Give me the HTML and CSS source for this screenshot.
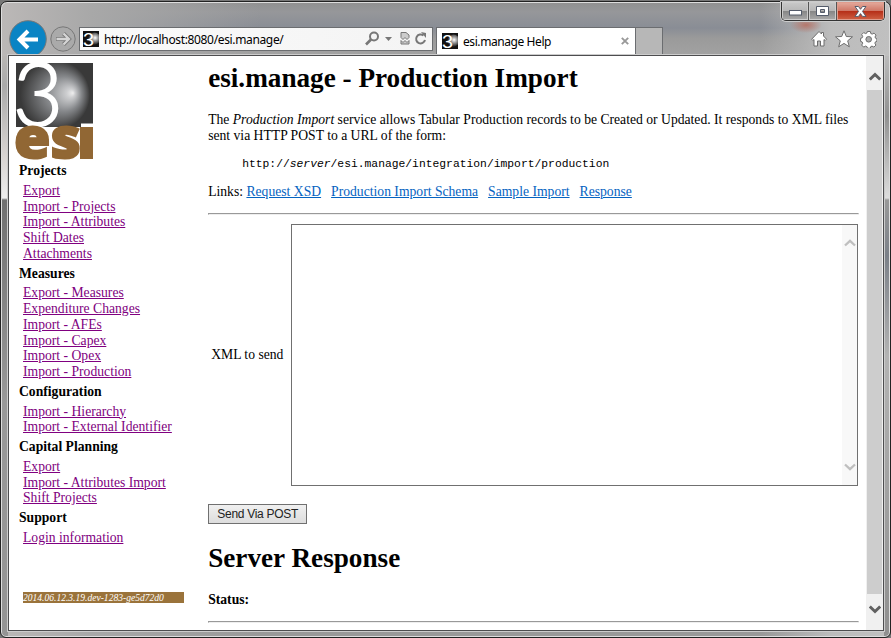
FILE: index.html
```
<!DOCTYPE html>
<html lang="en">
<head>
<meta charset="utf-8">
<title>esi.manage Help</title>
<link rel="stylesheet" href="styles.css">
</head>
<body>
<svg class="defs" width="0" height="0">
  <defs>
    <radialGradient id="globe" gradientUnits="userSpaceOnUse" cx="40" cy="32" r="35" fx="58" fy="30">
      <stop offset="0" stop-color="#eee"/><stop offset=".12" stop-color="#cdced0"/><stop offset=".5" stop-color="#85878a"/><stop offset="1" stop-color="#383838"/>
    </radialGradient>
    <symbol id="favicon" viewBox="0 0 16 16">
      <rect width="16" height="16" fill="#111"/><circle cx="11.500" cy="7.500" r="6" fill="url(#fav)"/>
      <text x="0" y="14.500" font-family="Liberation Sans" font-size="18" textLength="11" lengthAdjust="spacingAndGlyphs" fill="#fff">3</text>
    </symbol>
    <radialGradient id="fav" cx=".55" cy=".45"><stop offset="0" stop-color="#fff"/><stop offset="1" stop-color="#333"/></radialGradient>
  </defs>
</svg>
<div class="window">
  <header class="chrome">
    <svg class="back" width="38" height="34" viewBox="0 0 38 34"><circle cx="19" cy="19" r="18.300" fill="#0a84c4" stroke="#777" stroke-width="1"/><path d="M29 19.500H11M19 11l-8.500 8.500L19 28" fill="none" stroke="#fff" stroke-width="4"/></svg>
    <svg class="forward" width="26" height="26" viewBox="0 0 26 26"><circle cx="13" cy="13" r="12.200" fill="#aaa" stroke="#777"/><path d="M6 13h13M13.500 7.500l5.500 5.500-5.500 5.500" fill="none" stroke="#777" stroke-width="4"/><path d="M6.500 13h12.500M13.500 7.500l5.500 5.500-5.500 5.500" fill="none" stroke="#d5d5d5" stroke-width="2.300"/></svg>
    <div class="address">
      <svg width="16" height="16"><use href="#favicon"/></svg>
      <span class="url">http://localhost:8080/esi.manage/</span>
      <svg class="tools" width="62" height="16" viewBox="0 0 62 16" fill="none" stroke="#777">
        <circle cx="9" cy="5.500" r="4" stroke-width="2"/><path d="M6 8.500L1 13.500" stroke-width="2.600"/>
        <path d="M20 6h7l-3.500 4z" fill="#777" stroke="none"/>
        <path d="M36 6.500v-5h5l3 2.500v2.500l-2 2-2-2-2 2zM36 9.500l2 2 2-2 2 2 2-2v3.500h-8z" fill="#ccc"/>
        <path d="M58.500 4.500A4.500 4.500 0 1 0 60 9" stroke-width="2"/><path d="M56 1l5 1v5z" fill="#777" stroke="none"/>
      </svg>
    </div>
    <div class="tab">
      <svg width="16" height="16"><use href="#favicon"/></svg>
      <span class="tab-title">esi.manage Help</span>
      <svg class="tab-close" width="8" height="8"><path d="M.8.8l6.400 6.400M7.200.8L.8 7.200" stroke="#999" stroke-width="1.900"/></svg>
    </div>
    <div class="new-tab"></div>
    <div class="commands">
      <svg width="66" height="18" viewBox="0 0 66 18" fill="#fff" stroke="#6d6d6d">
        <path d="M.7 9.200L8 1.500l2.500 2.500V2.500h2V6l3 3.200-1.300 1.300-1.200-1V16h-3.500v-5h-3v5H3V9.500l-1.200 1z"/>
        <path d="M33 .8l2.300 5.700 6.200.3-4.800 4 1.600 6-5.300-3.400-5.300 3.400 1.600-6-4.800-4 6.200-.3z"/>
        <g><path d="M56.300 1.500h3l.5 2 1.400.6 1.800-1 2 2-1 1.900.6 1.300 1.300.5v2.500l-1.500.6-.5 1.300 1 1.900-2 2-1.900-1-1.300.6-.5 1.600h-2.700l-.6-1.700-1.300-.5-1.900 1-2-2 1-1.900-.6-1.300-1.500-.5V8.300l1.600-.5.5-1.400-1-1.800 2-2 1.900 1 1.300-.6z"/><circle cx="57.700" cy="9.300" r="2.800" fill="#aaa"/></g>
      </svg>
    </div>
    <div class="captions">
      <span class="cap"><svg width="13" height="6"><rect x=".5" y=".5" width="12" height="4.500" fill="#fff" stroke="#555c6b"/></svg></span>
      <span class="cap"><svg width="13" height="10"><path d="M.5.5h12v9H.5zM4.500 3.500v3h4v-3z" fill="#fff" fill-rule="evenodd" stroke="#555c6b"/></svg></span>
      <span class="cap cap-close"><svg width="13" height="11"><path d="M1 .5h3.500l2 2.800 2-2.800H12L8.500 5.400l3.500 5H8.500l-2-2.800-2 2.800H1l3.500-5z" fill="#fff" stroke="#555c6b"/></svg></span>
    </div>
  </header>
  <div class="viewport">
    <nav class="sidebar">
      <svg class="logo" width="78" height="96" viewBox="0 0 78 96">
        <path d="M1 0h77v64H1z" fill="#393939"/><circle cx="40" cy="32" r="35" fill="url(#globe)" clip-path="inset(3px 0)"/>
        <text x="-2" y="63" class="logo-three" textLength="50" lengthAdjust="spacingAndGlyphs">3</text>
        <text x="-1" y="95" class="logo-esi" textLength="67" lengthAdjust="spacingAndGlyphs">es</text>
        <path d="M66 60.500h12V64H66z" fill="#fff"/><path d="M65 64h13v32H65z" fill="#916734"/>
      </svg>
      <h4>Projects</h4>
      <ul><li><a>Export</a></li><li><a>Import - Projects</a></li><li><a>Import - Attributes</a></li><li><a>Shift Dates</a></li><li><a>Attachments</a></li></ul>
      <h4>Measures</h4>
      <ul><li><a>Export - Measures</a></li><li><a>Expenditure Changes</a></li><li><a>Import - AFEs</a></li><li><a>Import - Capex</a></li><li><a>Import - Opex</a></li><li><a>Import - Production</a></li></ul>
      <h4>Configuration</h4>
      <ul><li><a>Import - Hierarchy</a></li><li><a>Import - External Identifier</a></li></ul>
      <h4>Capital Planning</h4>
      <ul><li><a>Export</a></li><li><a>Import - Attributes Import</a></li><li><a>Shift Projects</a></li></ul>
      <h4>Support</h4>
      <ul><li><a>Login information</a></li></ul>
      <div class="version">2014.06.12.3.19.dev-1283-ge5d72d0</div>
    </nav>
    <main class="content">
      <h1>esi.manage - Production Import</h1>
      <p class="intro">The <em>Production Import</em> service allows Tabular Production records to be Created or Updated. It responds to XML files<br>sent via HTTP POST to a URL of the form:</p>
      <pre>http://<em>server</em>/esi.manage/integration/import/production</pre>
      <p class="links"><span>Links: <a>Request XSD</a></span><a>Production Import Schema</a><a>Sample Import</a><a>Response</a></p>
      <hr>
      <div class="field">
        <label>XML to send</label>
        <div class="textarea"><div class="inner-scroll">
          <svg width="12" height="8"><path d="M1 6.500L6 1.800l5 4.700" fill="none" stroke="#bfbfbf" stroke-width="2.300"/></svg>
          <svg width="12" height="8"><path d="M1 1.500L6 6.200l5-4.700" fill="none" stroke="#bfbfbf" stroke-width="2.300"/></svg>
        </div></div>
      </div>
      <button>Send Via POST</button>
      <h1 class="response">Server Response</h1>
      <p class="status">Status:</p>
      <hr>
    </main>
    <div class="scrollbar">
      <svg width="12" height="9"><path d="M.8 7.500L6 2.500l5.200 5" fill="none" stroke="#606060" stroke-width="3"/></svg>
      <div class="thumb"></div>
      <svg width="12" height="9"><path d="M.8 1.500L6 6.500l5.200-5" fill="none" stroke="#606060" stroke-width="3"/></svg>
    </div>
  </div>
</div>
</body>
</html>
```
FILE: styles.css
```
* { box-sizing: border-box; }
body { margin: 0; width: 891px; height: 638px; overflow: hidden; background: #777; font: 13.65px/15.75px "Liberation Serif", serif; color: #000; }
svg { display: block; flex: none; }
.defs { position: absolute; }
.window {
  height: 637px; margin-top: 1px; padding: 0 6px 7px 7px; border: 1px solid #222; border-radius: 7px 7px 6px 6px;
  box-shadow: inset 0 0 0 1px #ddd;
  background:
    linear-gradient(#b9b6b4, #aaa 30px, #d8d4d2 100px, #eee 142px, #707070 144px, #999 346px, #939393) 0 54px / 7px 100% no-repeat,
    linear-gradient(#bbb, #909090 60px, #ddd 142px, #999 144px, #7b8088 200px, #b3b3b3 300px, #888) 100% 54px / 6px 100% no-repeat,
    radial-gradient(ellipse 16px 8px at 805px 23px, #b5776b, transparent),
    linear-gradient(90deg, #bbb8b7, #a8a8a8 90px, transparent 260px, transparent 760px, #bcbcbc 830px, #c0c0c0),
    linear-gradient(#909090, #96979a 10px, #898d95 26px, #9a9a9a 36px, #a3a3a3 55px, #999 100%);
}
.chrome { position: relative; display: flex; height: 53px; padding-left: 1px; }
.back { margin-top: 18px; }
.forward { margin: 24px 0 0 3px; }
.address { display: flex; align-items: center; width: 354px; height: 24px; margin: 25px 0 0 3px; padding: 0 5px 0 3px; border: 1px solid #6b6d70; background: linear-gradient(90deg, #fafafa, #f4f4f4); }
.url, .tab-title { font: 12px/16px "Noto Sans", sans-serif; white-space: nowrap; }
.url { width: 179px; margin: 2px 0 0 5px; letter-spacing: -.35px; }
.tools { margin-left: auto; }
.tab { display: flex; align-items: center; width: 200px; height: 27px; margin: 25px 0 0 3px; padding: 0 6px 0 5px; border: solid #6b6d70; border-width: 1px 1px 0; background: #fff; }
.tab-title { margin: 2px 0 0 5px; letter-spacing: -.42px; }
.tab-close { margin-left: auto; }
.new-tab { width: 27px; height: 27px; margin-top: 25px; border: solid #6b6d70; border-width: 1px 1px 0 0; background: #b7b7b7; }
.commands { margin: 28px 0 0 148px; }
.captions { position: absolute; top: 0; right: -1px; display: flex; width: 104px; height: 19px; border: 1px solid #333; border-top: 0; border-radius: 0 0 5px 5px; overflow: hidden; box-shadow: 0 0 0 1px #ccc; }
.cap { display: flex; align-items: center; justify-content: center; width: 28px; border-right: 1px solid #555; background: linear-gradient(#c9c9c9, #b6b6b6 50%, #858585 50%, #aaa); box-shadow: inset 0 0 0 1px #ccc; }
.cap:first-child svg { margin-top: 4px; }
.cap-close { width: 48px; border: 0; background: linear-gradient(#e5ac9f, #cf7665 50%, #b52d17 50%, #cf6245); box-shadow: inset 0 0 0 1px #df9d8e; }
.viewport { display: flex; height: 576px; border: 1px solid #4d4d4f; background: #fff; overflow: hidden; box-shadow: 0 0 0 1px #ccc; }
.sidebar { width: 200px; padding: 7px 0 0 6px; }
.logo { overflow: visible; }
.logo-three { font: 300 88px Lato, sans-serif; fill: #fff; stroke: #fff; stroke-width: 2px; }
.logo-esi { font: 800 57px "Open Sans", sans-serif; fill: #916734; stroke: #916734; stroke-width: 2px; }
h4 { margin: 0; padding: 4px 0 4px 4px; font: bold 13.65px/15.75px "Liberation Serif", serif; }
ul { list-style: none; margin: 0; padding: 0 0 0 8px; }
.sidebar a { color: #800080; text-decoration: underline; }
.version { width: 161px; height: 11px; margin: 46px 0 0 8px; background: #9a733b; color: #fff; font: italic 9.55px/11px "Liberation Serif", serif; white-space: nowrap; }
.content { width: 651px; margin-left: 1px; flex: none; margin-right: -1px; }
h1 { margin: 6px 0 0; font: bold 27.2px/32px "Liberation Serif", serif; white-space: nowrap; }
p { margin: 0; white-space: nowrap; }
.intro { margin-top: 18px; line-height: 16px; }
pre { margin: 13px 0 0 34px; font: 11.34px/14px "Liberation Mono", monospace; }
.links { display: flex; gap: 10px; margin-top: 13px; line-height: 16px; }
.links a { color: #0563c1; text-decoration: underline; }
hr { height: 2px; margin: 13px 0 0; border: 1px solid #999; border-right-color: #eee; border-bottom-color: #eee; }
.field { display: flex; align-items: center; width: 650px; height: 262px; margin-top: 9px; padding-left: 3px; }
.field label { width: 80px; }
.textarea { display: flex; justify-content: flex-end; flex: 1; height: 262px; border: 1px solid #707070; }
.inner-scroll { display: flex; flex-direction: column; justify-content: space-between; width: 15px; padding: 14px 0 14px 2px; background: #f8f8f8; }
button { display: block; width: 99px; height: 20px; margin: 18px 0 0; padding: 0; border: 1px solid #707070; border-radius: 0; background: linear-gradient(#f0f0f0, #ddd); color: #222; font: 12px/16px "Liberation Sans", sans-serif; letter-spacing: -.3px; white-space: nowrap; }
.response { margin-top: 18px; }
.status { margin-top: 18px; font-weight: bold; }
.status + hr { margin-top: 13px; }
.scrollbar { display: flex; flex-direction: column; align-items: center; width: 17px; margin-left: 8px; padding: 16px 0; background: #f0f0f0; }
.thumb { width: 15px; flex: 1; margin: 9px 0 11px; background: #cdcdcd; }
```
